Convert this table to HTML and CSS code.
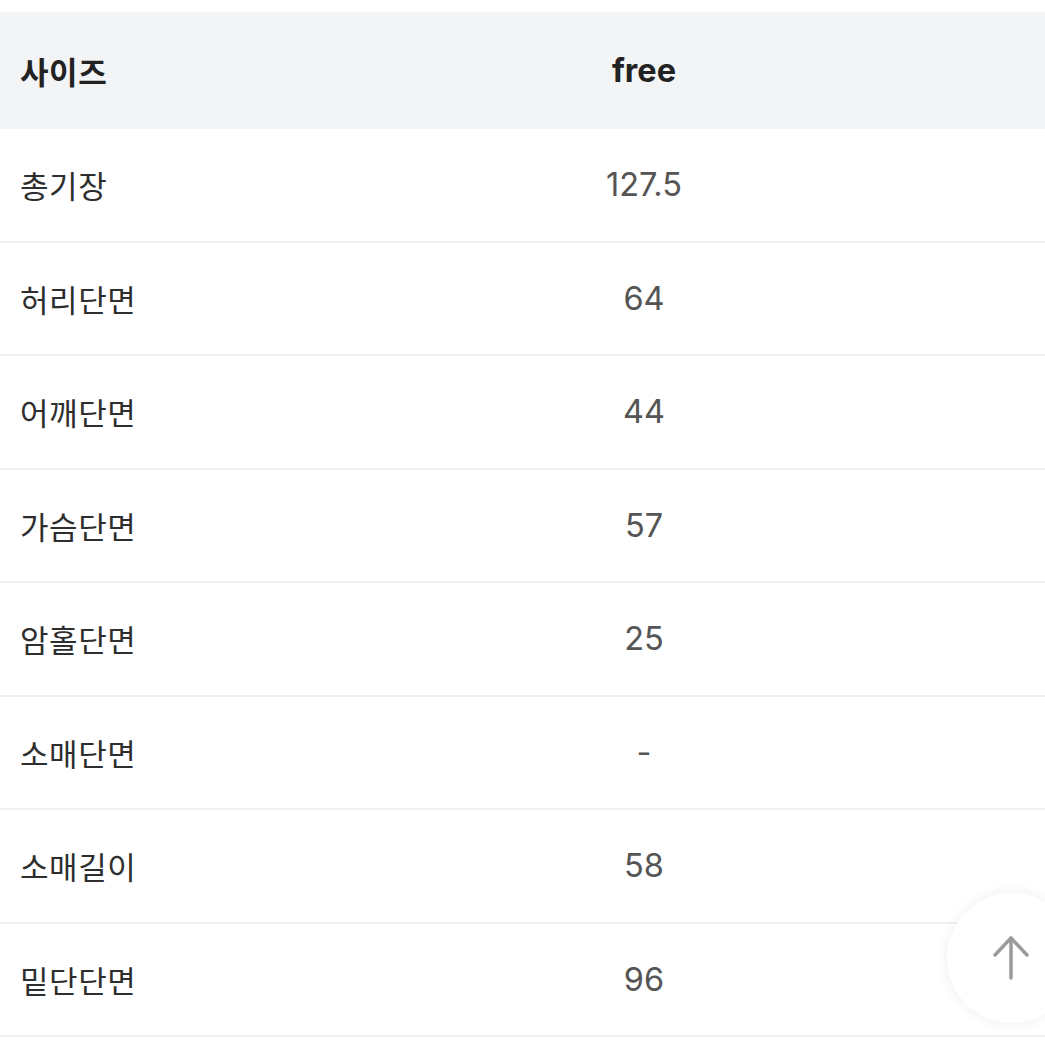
FILE: index.html
```html
<!DOCTYPE html>
<html lang="ko">
<head>
<meta charset="utf-8">
<link rel="stylesheet" href="styles.css">
</head>
<body>
<div class="page">
  <div class="table">
    <div class="row head"><div class="label">사이즈</div><div class="value">free</div></div>
    <div class="row"><div class="label">총기장</div><div class="value">127.5</div></div>
    <div class="row"><div class="label">허리단면</div><div class="value">64</div></div>
    <div class="row"><div class="label">어깨단면</div><div class="value">44</div></div>
    <div class="row"><div class="label">가슴단면</div><div class="value">57</div></div>
    <div class="row"><div class="label">암홀단면</div><div class="value">25</div></div>
    <div class="row"><div class="label">소매단면</div><div class="value">-</div></div>
    <div class="row"><div class="label">소매길이</div><div class="value">58</div></div>
    <div class="row"><div class="label">밑단단면</div><div class="value">96</div></div>
  </div>
  <button class="top-btn" aria-label="맨 위로">
    <svg width="38" height="46" viewBox="0 0 38 46" fill="none" stroke="#9b9b9b" stroke-width="3.5" stroke-linecap="round" stroke-linejoin="round">
      <path d="M19 3 V43"/>
      <path d="M3 20 L19 3 L35 20"/>
    </svg>
  </button>
</div>
</body>
</html>
```

FILE: styles.css
```css
html, body {
  margin: 0;
  padding: 0;
  background: #ffffff;
}
body {
  font-family: Inter, "Noto Sans CJK KR", sans-serif;
  overflow: hidden;
}
.page {
  position: relative;
  width: 1045px;
  height: 1045px;
  padding-top: 12px;
  box-sizing: border-box;
}
.table {
  display: flex;
  flex-direction: column;
}
.row {
  display: grid;
  grid-template-columns: 243px 1fr;
  align-items: center;
  height: 111.5px;
  border-bottom: 2px solid #f0f0f1;
}
.row.head {
  height: 117px;
  background: #f3f4f6;
  border-bottom: none;
}
.label {
  padding-left: 20px;
  font-size: 31px;
  color: #2e2e2e;
  font-family: "Noto Sans CJK KR", sans-serif;
  letter-spacing: 0.6px;
}
.value {
  text-align: center;
  font-size: 32.5px;
  color: #555555;
}
.head .label, .head .value {
  font-weight: 700;
  color: #222222;
}
.top-btn {
  position: absolute;
  left: 947px;
  top: 893px;
  width: 130px;
  height: 130px;
  border-radius: 50%;
  border: none;
  background: #ffffff;
  box-shadow: 0 0 14px rgba(0,0,0,0.07);
  display: flex;
  align-items: center;
  justify-content: center;
  padding: 0;
}
.top-btn svg {
  display: block;
  margin-left: -2px;
}
```
